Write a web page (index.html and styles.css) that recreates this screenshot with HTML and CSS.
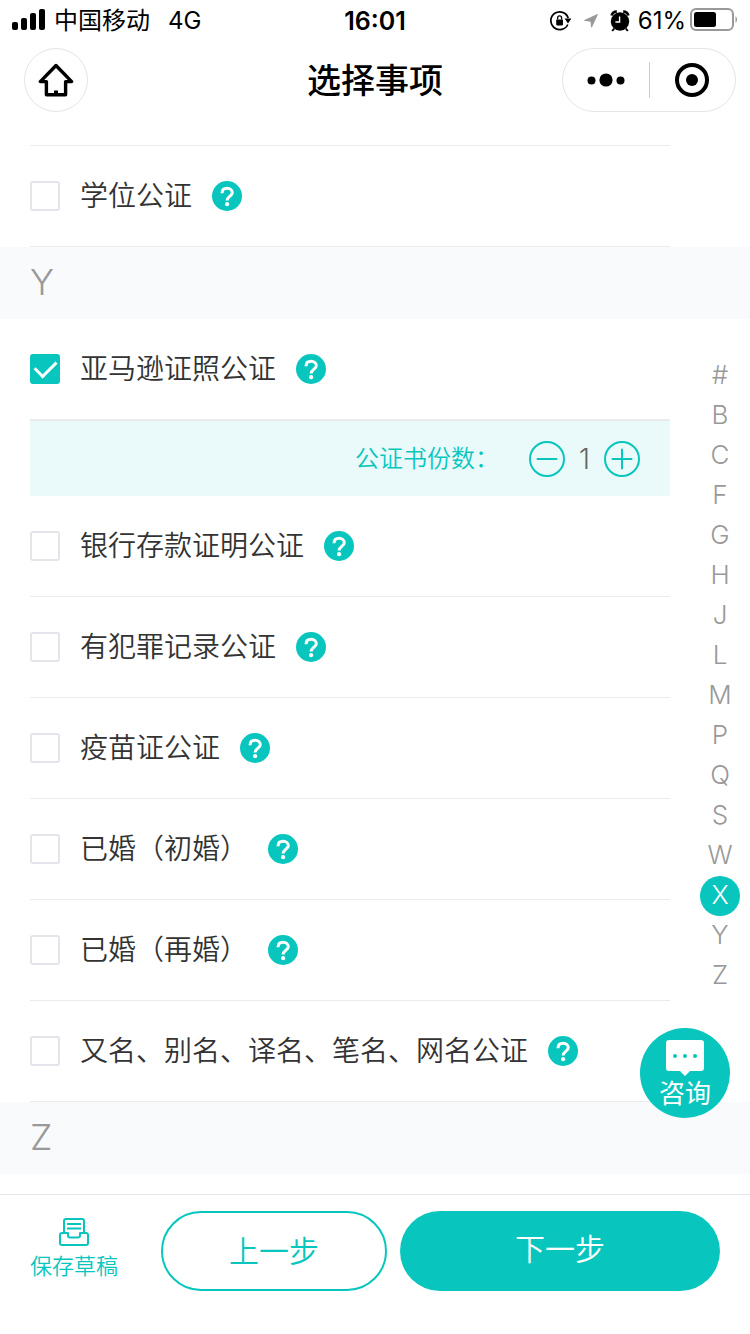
FILE: index.html
```html
<!DOCTYPE html>
<html lang="zh-CN">
<head>
<meta charset="utf-8">
<meta name="viewport" content="width=device-width, initial-scale=1">
<title>选择事项</title>
<link rel="stylesheet" href="styles.css">
</head>
<body>
<svg class="defs" aria-hidden="true">
  <symbol id="help" viewBox="0 0 30 30">
    <circle cx="15" cy="15" r="15" fill="#08c6be"/>
    <path d="M10 12.200C10 9 12.200 7.300 15.200 7.300C18.200 7.300 20.300 9.200 20.300 11.700C20.300 15 15.100 15.400 15.100 19.600" fill="none" stroke="#fff" stroke-width="3"/>
    <circle cx="15.1" cy="23.2" r="2.1" fill="#fff"/>
  </symbol>
</svg>
<div class="page">
  <div class="status">
    <div class="status-side">
      <svg class="signal" width="34" height="22" viewBox="0 0 34 22">
        <rect x="0" y="13" width="6" height="8" rx="2"/><rect x="9" y="9" width="6" height="12" rx="2"/><rect x="18" y="4" width="6" height="17" rx="2"/><rect x="27" y="0" width="6" height="21" rx="2"/>
      </svg>
      <span>中国移动</span>
      <span class="network">4G</span>
    </div>
    <time class="clock">16:01</time>
    <div class="status-side status-right">
      <svg width="22" height="22" viewBox="0 0 22 22">
        <path d="M17.8 14.5A8.9 8.9 0 1 1 18.2 8" fill="none" stroke="#000" stroke-width="1.7"/>
        <path d="M14.6 8.6h6.8L18 13.4z"/>
        <rect x="6.2" y="9.4" width="6.8" height="6" rx=".8"/>
        <path d="M7.6 9.6V7.8a2 2 0 0 1 4 0v1.8" fill="none" stroke="#000" stroke-width="1.3"/>
      </svg>
      <svg class="locate" width="14" height="14" viewBox="0 0 14 14"><path d="M13.4.6L7.5 13.200L7 7.200L.6 6.400z" fill="#999" stroke="#999" stroke-linejoin="round"/></svg>
      <svg class="alarm" width="20" height="22" viewBox="0 0 20 22">
        <circle cx="10" cy="11.5" r="9.2"/>
        <path d="M1.600 5.600A5 5 0 0 1 6.800 1.600M18.400 5.600A5 5 0 0 0 13.200 1.600" fill="none" stroke="#000" stroke-width="2.600"/>
        <path d="M4.2 18.5L2.2 21M15.8 18.5L17.8 21" stroke="#000" stroke-width="2"/>
        <path d="M9.600 6.500v5.500H5.400" fill="none" stroke="#fff" stroke-width="1.4"/>
      </svg>
      <span>61%</span>
      <svg class="battery" width="48" height="24" viewBox="0 0 48 24">
        <rect x="1" y="1" width="42" height="21" rx="5" fill="none" stroke="#999" stroke-width="2"/>
        <rect x="4" y="4" width="22" height="15" rx="2.5"/>
        <path d="M45.5 8.2v6.6c2-1 2-5.600 0-6.600z" fill="#999"/>
      </svg>
    </div>
  </div>

  <header class="nav">
    <button class="home" type="button" aria-label="首页">
      <svg width="36" height="34" viewBox="0 0 36 34" fill="none" stroke="#000" stroke-width="3.4" stroke-linejoin="round" stroke-linecap="round">
        <path d="M18 2.500L2.300 18.600H8.400V31.800H27.600V18.600H33.700Z"/><path d="M18 27.500v3" stroke-width="4" stroke-linecap="butt"/>
      </svg>
    </button>
    <h1 class="title">选择事项</h1>
    <div class="capsule">
      <button type="button" aria-label="更多">
        <svg width="38" height="14" viewBox="0 0 38 14"><circle cx="4.500" cy="7.500" r="4"/><circle cx="19" cy="7" r="6.600"/><circle cx="33.500" cy="7.500" r="4"/></svg>
      </button>
      <button type="button" aria-label="关闭">
        <svg width="34" height="34" viewBox="0 0 34 34"><circle cx="17" cy="17" r="15" fill="none" stroke="#000" stroke-width="4"/><circle cx="17" cy="17" r="6"/></svg>
      </button>
    </div>
  </header>

  <main class="content">
    <ul class="list first">
      <li class="row"><label><input class="check" type="checkbox"><span>学位公证</span></label><button class="help" type="button" aria-label="说明"><svg><use href="#help"/></svg></button></li>
    </ul>
    <h2 class="band">Y</h2>
    <ul class="list">
      <li class="row"><label><input class="check" type="checkbox" checked><span>亚马逊证照公证</span></label><button class="help" type="button" aria-label="说明"><svg><use href="#help"/></svg></button></li>
      <li class="copies">
        <span class="copies-label">公证书份数：</span>
        <div class="stepper">
          <button type="button" aria-label="减少"><svg width="36" height="36" viewBox="0 0 36 36"><circle cx="18" cy="18" r="17"/><path d="M8.500 18h19"/></svg></button>
          <output>1</output>
          <button type="button" aria-label="增加"><svg width="36" height="36" viewBox="0 0 36 36"><circle cx="18" cy="18" r="17"/><path d="M8.500 18h19M18 8.500v19"/></svg></button>
        </div>
      </li>
      <li class="row"><label><input class="check" type="checkbox"><span>银行存款证明公证</span></label><button class="help" type="button" aria-label="说明"><svg><use href="#help"/></svg></button></li>
      <li class="row"><label><input class="check" type="checkbox"><span>有犯罪记录公证</span></label><button class="help" type="button" aria-label="说明"><svg><use href="#help"/></svg></button></li>
      <li class="row"><label><input class="check" type="checkbox"><span>疫苗证公证</span></label><button class="help" type="button" aria-label="说明"><svg><use href="#help"/></svg></button></li>
      <li class="row"><label><input class="check" type="checkbox"><span>已婚（初婚）</span></label><button class="help" type="button" aria-label="说明"><svg><use href="#help"/></svg></button></li>
      <li class="row"><label><input class="check" type="checkbox"><span>已婚（再婚）</span></label><button class="help" type="button" aria-label="说明"><svg><use href="#help"/></svg></button></li>
      <li class="row"><label><input class="check" type="checkbox"><span>又名、别名、译名、笔名、网名公证</span></label><button class="help" type="button" aria-label="说明"><svg><use href="#help"/></svg></button></li>
    </ul>
    <h2 class="band">Z</h2>

    <nav class="index" aria-label="字母索引">
      <button type="button">#</button><button type="button">B</button><button type="button">C</button><button type="button">F</button><button type="button">G</button><button type="button">H</button><button type="button">J</button><button type="button">L</button><button type="button">M</button><button type="button">P</button><button type="button">Q</button><button type="button">S</button><button type="button">W</button><button type="button" class="active">X</button><button type="button">Y</button><button type="button">Z</button>
    </nav>
    <button class="consult" type="button">
      <svg width="40" height="38" viewBox="0 0 40 38"><path d="M4 1h32a3 3 0 0 1 3 3v25a3 3 0 0 1-3 3H25l-5 5l-5-5H4a3 3 0 0 1-3-3V4a3 3 0 0 1 3-3z" fill="#fff"/><g fill="#08c6be"><circle cx="10" cy="17" r="2"/><circle cx="20" cy="17" r="2"/><circle cx="30" cy="17" r="2"/></g></svg>
      <span>咨询</span>
    </button>
  </main>

  <footer class="footer">
    <button class="save" type="button">
      <svg width="30" height="28" viewBox="0 0 30 28" fill="none" stroke="#08c6be" stroke-width="2" stroke-linejoin="round">
        <path d="M5 14V3a2 2 0 0 1 2-2h16a2 2 0 0 1 2 2v11"/><path d="M8 6h14M8 10.500h14"/>
        <path d="M3 15h6v2.500a2 2 0 0 0 2 2h8a2 2 0 0 0 2-2V15h6a2 2 0 0 1 2 2v8a2 2 0 0 1-2 2H3a2 2 0 0 1-2-2v-8a2 2 0 0 1 2-2z"/>
      </svg>
      <span>保存草稿</span>
    </button>
    <button class="step prev" type="button">上一步</button>
    <button class="step next" type="button">下一步</button>
  </footer>
</div>
</body>
</html>
```
FILE: styles.css
```css
:root {
  --teal: #08c6be;
  --line: #ebebeb;
  --text-weight: 350;
}
* { box-sizing: border-box; }
body {
  margin: 0;
  background: #fff;
  color: #333;
  font-family: Inter, "Noto Sans CJK SC", sans-serif;
  font-size: 28px;
}
button {
  margin: 0;
  padding: 0;
  border: 0;
  background: none;
  color: inherit;
  font: inherit;
  cursor: pointer;
}
svg { display: block; }
.defs { display: none; }
.page {
  min-height: 100vh;
  display: flex;
  flex-direction: column;
}

/* Status bar */
.status {
  height: 40px;
  padding: 2px 12px 0;
  display: grid;
  grid-template-columns: 1fr auto 1fr;
  align-items: center;
  color: #000;
  font-size: 24px;
  line-height: 38px;
}
.status-side { display: flex; align-items: center; gap: 8px; }
.status-right { justify-content: flex-end; }
.signal, .battery { margin-top: -2px; }
.network { margin-left: 10px; }
.clock { font-size: 25px; font-weight: 600; }
.locate { margin-left: 4px; }
.alarm { margin-left: 4px; }
.battery { margin-left: -4px; }

/* Title bar */
.nav {
  height: 80px;
  padding: 0 14px;
  display: grid;
  grid-template-columns: 1fr auto 1fr;
  align-items: center;
}
.home {
  width: 64px;
  height: 64px;
  margin-left: 10px;
  border: 1px solid #e5e5e5;
  border-radius: 50%;
  display: grid;
  place-items: center;
}
.title {
  margin: 0;
  padding-top: 2px;
  color: #000;
  font-size: 34px;
  font-weight: 500;
  line-height: 48px;
}
.capsule {
  justify-self: end;
  width: 174px;
  height: 64px;
  border: 1px solid #e5e5e5;
  border-radius: 32px;
  display: flex;
  align-items: center;
}
.capsule button {
  flex: 1;
  height: 36px;
  display: grid;
  place-items: center;
}
.capsule button + button { border-left: 1px solid #ccc; }

/* List */
.content {
  position: relative;
  flex: 1;
  padding: 25px 0 20px;
}
.list {
  margin: 0 80px 0 30px;
  padding: 0;
  list-style: none;
}
.first { border-top: 1px solid var(--line); }
.row {
  height: 101px;
  border-bottom: 1px solid var(--line);
  display: flex;
  align-items: center;
  gap: 20px;
}
.row label {
  display: flex;
  align-items: center;
  gap: 20px;
  line-height: 40px;
  font-weight: var(--text-weight);
}
.check {
  appearance: none;
  width: 30px;
  height: 30px;
  margin: 0;
  border: 2px solid #e4e4ea;
  border-radius: 3px;
  display: grid;
  place-content: start center;
}
.check:checked { background: var(--teal); border-color: var(--teal); }
.check:checked::after {
  content: "";
  width: 10px;
  height: 18px;
  border: solid #fff;
  border-width: 0 3px 3px 0;
  transform: rotate(45deg);
}
.help, .help svg { width: 30px; height: 30px; }
.band {
  height: 72px;
  margin: 0;
  padding-left: 30px;
  background: #f9fafc;
  color: #999;
  font-size: 36px;
  font-weight: 300;
  line-height: 70px;
}
.copies {
  height: 76px;
  padding-right: 30px;
  border-top: 1px solid var(--line);
  background: #eafafa;
  display: flex;
  align-items: center;
  justify-content: flex-end;
  gap: 30px;
}
.copies-label {
  color: var(--teal);
  font-size: 24px;
  font-weight: var(--text-weight);
  line-height: 36px;
}
.stepper {
  display: flex;
  align-items: center;
  gap: 12px;
  color: #666;
}
.stepper output { width: 15px; text-align: center; font-weight: 300; }
.stepper svg {
  fill: none;
  stroke: var(--teal);
  stroke-width: 2;
  stroke-linecap: round;
}

/* Overlays */
.index {
  position: absolute;
  top: 236px;
  right: 10px;
  width: 40px;
  display: flex;
  flex-direction: column;
  color: #999;
  font-size: 26px;
  font-weight: 300;
}
.index button { height: 40px; padding-bottom: 2px; line-height: 38px; }
.index .active {
  border-radius: 50%;
  background: var(--teal);
  color: #fff;
}
.consult {
  position: absolute;
  right: 20px;
  bottom: 76px;
  width: 90px;
  height: 90px;
  border-radius: 50%;
  background: var(--teal);
  color: #fff;
  font-size: 26px;
  line-height: 32px;
  display: flex;
  flex-direction: column;
  align-items: center;
  justify-content: center;
  gap: 1px;
  padding-top: 2px;
}

/* Footer */
.footer {
  min-height: 140px;
  padding: 16px 30px 0;
  border-top: 1px solid #e4e4ea;
  display: grid;
  grid-template-columns: auto 226fr 320fr;
  align-items: start;
  column-gap: 13px;
}
.save {
  height: 80px;
  margin-right: 30px;
  padding-bottom: 2px;
  color: var(--teal);
  font-size: 22px;
  font-weight: var(--text-weight);
  line-height: 32px;
  display: flex;
  flex-direction: column;
  align-items: center;
  justify-content: center;
  gap: 4px;
}
.step {
  height: 80px;
  border-radius: 40px;
  font-size: 30px;
  font-weight: var(--text-weight);
}
.prev {
  padding-bottom: 4px;
  border: 2px solid var(--teal);
  color: var(--teal);
}
.next {
  padding-bottom: 8px;
  background: var(--teal);
  color: #fff;
}
```
